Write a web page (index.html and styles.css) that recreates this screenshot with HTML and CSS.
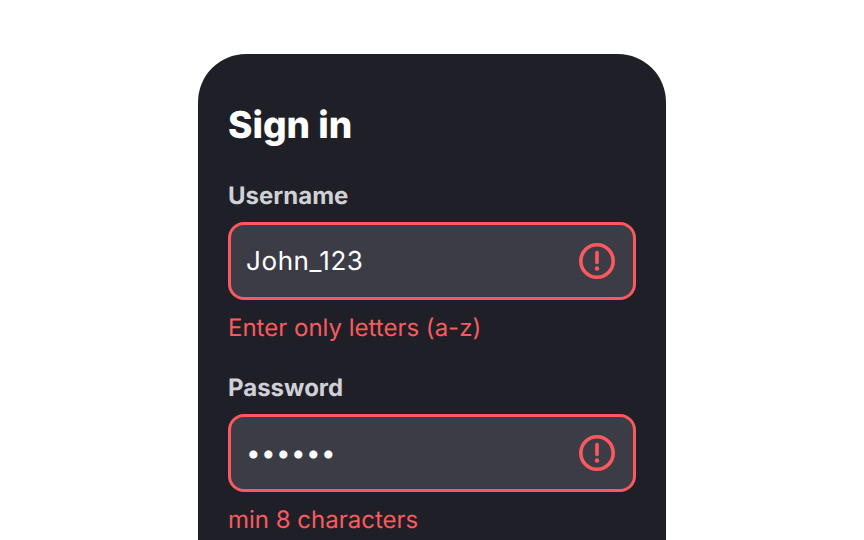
FILE: index.html
```html
<!DOCTYPE html>
<html lang="en">

<head>
    <meta charset="UTF-8" />
    <meta name="viewport" content="width=device-width, initial-scale=1.0" />
    <title>Sign in</title>
    <link rel="stylesheet" href="styles.css">
</head>

<body>
    <main class="card">
        <h1 class="title">Sign in</h1>
        <div class="field">
            <label class="label">Username</label>
            <div class="input-box">
                <span class="value">John_123</span>
                <svg class="icon" viewBox="0 0 36 36" fill="none">
                    <circle cx="18" cy="18" r="16.2" stroke="#fa5a5e" stroke-width="3.6" />
                    <path d="M18 9.5v10" stroke="#fa5a5e" stroke-width="3.6" stroke-linecap="round" />
                    <circle cx="18" cy="25.5" r="2.2" fill="#fa5a5e" />
                </svg>
            </div>
            <p class="error">Enter only letters (a-z)</p>
        </div>
        <div class="field">
            <label class="label">Password</label>
            <div class="input-box">
                <span class="value dots">&bull;&bull;&bull;&bull;&bull;&bull;</span>
                <svg class="icon" viewBox="0 0 36 36" fill="none">
                    <circle cx="18" cy="18" r="16.2" stroke="#fa5a5e" stroke-width="3.6" />
                    <path d="M18 9.5v10" stroke="#fa5a5e" stroke-width="3.6" stroke-linecap="round" />
                    <circle cx="18" cy="25.5" r="2.2" fill="#fa5a5e" />
                </svg>
            </div>
            <p class="error">min 8 characters</p>
        </div>
    </main>
</body>

</html>
```
FILE: styles.css
```css
* {
    margin: 0px;
    padding: 0px;
    box-sizing: border-box;
}

html,
body {
    height: 540px;
    overflow: hidden;
}

body {
    background: #fff;
    font-family: "Inter", sans-serif;
    text-rendering: geometricPrecision;
    display: flex;
    justify-content: center;
    padding-top: 54px;
}

.card {
    width: 468px;
    height: 486px;
    padding: 46px 30px 0px;
    background-color: #1f2027;
    border-radius: 48px 48px 0px 0px;
    flex-shrink: 0;
}

.title {
    font-size: 37px;
    line-height: 50px;
    font-weight: 800;
    color: #fff;
}

.field {
    margin-top: 30px;
}

.field + .field {
    margin-top: 28px;
}

.label {
    display: block;
    font-size: 24px;
    line-height: 32px;
    font-weight: 700;
    color: #d0d1d6;
}

.input-box {
    display: flex;
    align-items: center;
    justify-content: space-between;
    height: 78px;
    margin-top: 10px;
    padding: 0px 18px 0px 15px;
    background-color: #3b3c45;
    border: 3px solid #fa5a5e;
    border-radius: 16px;
}

.value {
    font-size: 26px;
    letter-spacing: 0.6px;
    color: #fff;
}

.dots {
    letter-spacing: 0.4px;
}

.icon {
    width: 36px;
    height: 36px;
}

.error {
    margin-top: 12px;
    font-size: 24px;
    line-height: 32px;
    color: #fa5a5e;
}
```
